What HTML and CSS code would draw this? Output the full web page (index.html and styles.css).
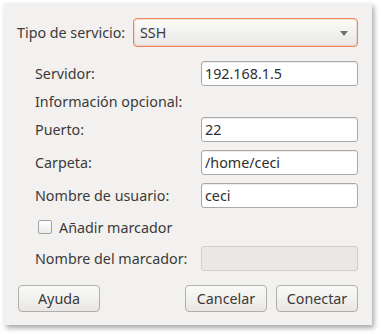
FILE: index.html
```html
<!DOCTYPE html>
<html>
<head>
<meta charset="utf-8">
<link rel="stylesheet" href="styles.css">
</head>
<body>
<div class="dialog">
  <div class="type-row">
    <span class="type-label">Tipo de servicio:</span>
    <div class="combo"><span>SSH</span><span class="arrow"></span></div>
  </div>
  <div class="form">
    <div class="row r-server"><span class="lbl">Servidor:</span><div class="entry">192.168.1.5</div></div>
    <div class="row r-info"><span class="lbl">Información opcional:</span></div>
    <div class="row r-port"><span class="lbl">Puerto:</span><div class="entry">22</div></div>
    <div class="row r-folder"><span class="lbl">Carpeta:</span><div class="entry">/home/ceci</div></div>
    <div class="row r-user"><span class="lbl">Nombre de usuario:</span><div class="entry">ceci</div></div>
    <div class="row r-check"><span class="check"></span><span class="check-lbl">Añadir marcador</span></div>
    <div class="row r-mark"><span class="lbl">Nombre del marcador:</span><div class="entry disabled"></div></div>
  </div>
  <div class="buttons">
    <div class="btn">Ayuda</div>
    <div class="spacer"></div>
    <div class="btn">Cancelar</div>
    <div class="btn">Conectar</div>
  </div>
</div>
</body>
</html>
```
FILE: styles.css
```css
html, body { margin: 0; padding: 0; background: #ffffff; }
body { width: 381px; height: 334px; overflow: hidden; }
.dialog {
  margin: 3px 0 0 4px;
  width: 368px;
  height: 322px;
  background: #f2f1f0;
  box-shadow: 2px 3px 5px rgba(0,0,0,0.35);
  box-sizing: border-box;
  font-family: "Noto Sans", "Open Sans", sans-serif;
  font-size: 14.3px;
  color: #3c3a38;
  display: flex;
  flex-direction: column;
  padding: 15px 14px 0 13px;
}
.type-row { display: flex; align-items: center; height: 29px; }
.type-label { width: 116px; }
.combo {
  flex: 1;
  height: 29px;
  box-sizing: border-box;
  border: 1px solid #f0845a;
  border-radius: 4px;
  background: linear-gradient(#fbfbfa, #e9e8e7);
  box-shadow: inset 0 0 0 1px rgba(240,132,90,0.25);
  display: flex;
  align-items: center;
  justify-content: space-between;
  padding: 0 9px 0 6px;
}
.arrow {
  width: 0; height: 0;
  border-left: 4px solid transparent;
  border-right: 4px solid transparent;
  border-top: 5px solid #707070;
  margin-top: 1px;
}
.form { display: flex; flex-direction: column; padding-left: 18px; }
.row { display: flex; align-items: center; height: 25px; }
.lbl { width: 166px; flex: none; }
.entry {
  width: 157px;
  height: 25px;
  box-sizing: border-box;
  border: 1px solid #aaa9a8;
  border-radius: 3px;
  background: #ffffff;
  box-shadow: inset 0 1px 1px rgba(0,0,0,0.08);
  padding-left: 3px;
  line-height: 23px;
  color: #2e2e2e;
}
.entry.disabled { background: #e9e8e7; border-color: #cfcecd; box-shadow: none; }
.r-server { margin-top: 14px; }
.r-info { height: 18px; margin-top: 6px; }
.r-port { margin-top: 7px; }
.r-folder { margin-top: 8px; }
.r-user { margin-top: 8px; }
.r-check { height: 18px; margin-top: 10px; }
.r-mark { margin-top: 10px; }
.check {
  width: 12px; height: 12px;
  margin-left: 3px;
  border: 1px solid #a0a09f;
  border-radius: 2px;
  background: linear-gradient(#ffffff, #ececec);
}
.check-lbl { margin-left: 7px; }
.buttons { display: flex; margin-top: 14px; gap: 9px; padding-left: 1px; }
.spacer { flex: 1; }
.btn {
  width: 82px;
  height: 27px;
  box-sizing: border-box;
  border: 1px solid #b0afae;
  border-radius: 4px;
  background: linear-gradient(#fafaf9, #e8e7e6);
  text-align: center;
  line-height: 25px;
}
```
